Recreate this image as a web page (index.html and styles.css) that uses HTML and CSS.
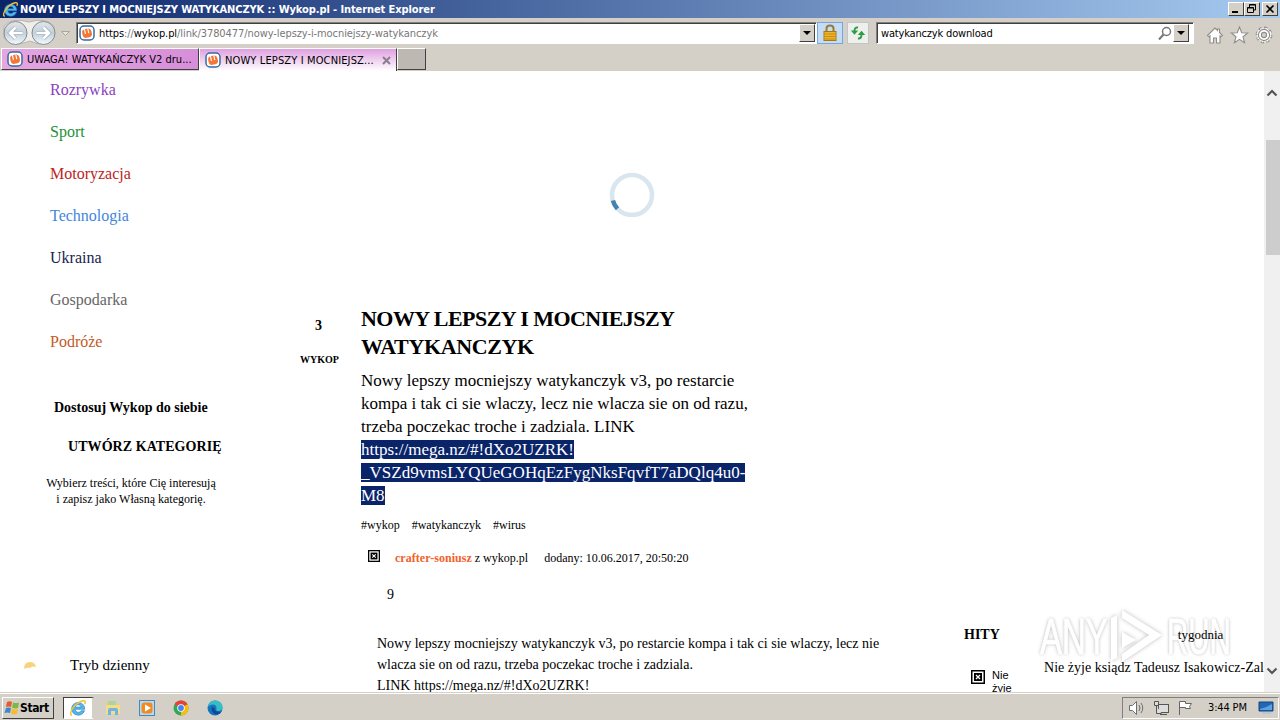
FILE: index.html
```
<!DOCTYPE html>
<html lang="pl">
<head>
  <meta charset="UTF-8"/>
  <title>NOWY LEPSZY I MOCNIEJSZY WATYKANCZYK :: Wykop.pl</title>
  <link rel="stylesheet" href="styles.css">
</head>
<body>
<!-- shared icons -->
<svg class="defs" width="0" height="0">
  <symbol id="ie" viewBox="0 0 16 16">
    <path d="M14 9.200H5.500c.2 3 4.200 3.300 5.200 1.200h3.100C11.800 16.500 2.200 15.300 2.400 8.500 2.600 1.500 14 .8 14 9.200zM5.500 7.200h5.200c-.4-2.800-4.800-2.800-5.200 0z" fill="#52b6ec" stroke="#2377b9" stroke-width=".5"/>
    <path d="M2.600 14.500C-1.500 13 6 2.800 12.500 1.600c2.400-.3 2.300 1.500 1.400 3" fill="none" stroke="#f2c136" stroke-width="1.300"/>
  </symbol>
  <symbol id="wykop" viewBox="0 0 16 16">
    <rect x="1" y="1" width="14" height="14" rx="4" fill="#fff" stroke="#376b9f" stroke-width="1.500"/>
    <g transform="rotate(-12 8 8)">
      <rect x="3.300" y="3.800" width="9.400" height="8.800" rx="3.300" fill="#f37736"/>
      <path d="M6.300 3.500v5M9.700 3.500v5" fill="none" stroke="#fff" stroke-width="1.100"/>
    </g>
  </symbol>
  <symbol id="broken" viewBox="0 0 14 14">
    <rect x=".75" y=".75" width="12.500" height="12.500" fill="#fff" stroke="#000" stroke-width="1.500"/>
    <rect x="3" y="3" width="8" height="8" fill="#000"/>
    <path d="M5 5l4 4M9 5l-4 4" stroke="#fff" stroke-width="1.300"/>
  </symbol>
</svg>

<header class="titlebar">
  <svg class="app-icon"><use href="#ie"/></svg>
  <span class="title">NOWY LEPSZY I MOCNIEJSZY WATYKANCZYK :: Wykop.pl - Internet Explorer</span>
  <div class="win-buttons">
    <i><svg viewBox="0 0 14 12"><path d="M3 9h6" stroke="#000" stroke-width="2"/></svg></i>
    <i><svg viewBox="0 0 14 12"><path d="M4.500 4V1.500h6V7H9M2.500 4.500h6v5h-6zM4.500 2h6M2.500 5h6" fill="none" stroke="#000"/></svg></i>
    <i class="close"><svg viewBox="0 0 14 12"><path d="M3.500 2.500l7 7M10.500 2.500l-7 7" stroke="#000" stroke-width="1.600"/></svg></i>
  </div>
</header>

<nav class="toolbar">
  <svg class="backfwd" viewBox="0 0 74 30">
    <defs>
      <linearGradient id="orb" x2="0" y2="1">
        <stop offset="0" stop-color="#e4e7ea"/><stop offset=".5" stop-color="#c2cfda"/><stop offset="1" stop-color="#f3fbfe"/>
      </linearGradient>
    </defs>
    <path d="M4 8Q12-1 29 4 46-1 54 8v12q-10 10-24 3Q14 30 4 20z" fill="#f0eeea" stroke="#b9b6b0"/>
    <g fill="url(#orb)" stroke="#858b91">
      <circle cx="15.500" cy="15" r="11.500"/><circle cx="43.500" cy="15" r="11.500"/>
    </g>
    <g fill="none" stroke="#9aacba" stroke-width="4">
      <path d="M22.500 15H10M15.500 9.500L10 15l5.500 5.500M36.500 15H49M43.500 9.500L49 15l-5.500 5.500"/>
    </g>
    <g fill="none" stroke="#fff" stroke-width="2.600">
      <path d="M22.500 15H10M15.500 9.500L10 15l5.500 5.500M36.500 15H49M43.500 9.500L49 15l-5.500 5.500"/>
    </g>
    <path d="M61.500 13.500h8l-4 4z" fill="#e8e5df" stroke="#aaa59d"/>
  </svg>
  <div class="field address">
    <svg class="fav"><use href="#wykop"/></svg>
    <span class="url"><b>https</b>://<b>wykop.pl</b>/link/3780477/nowy-lepszy-i-mocniejszy-watykanczyk</span>
    <i class="drop"></i>
  </div>
  <div class="tool lock">
    <svg width="16" height="18" viewBox="0 0 16 18">
      <path d="M4.500 8V4.500q0-3 3.500-3t3.500 3V8" fill="none" stroke="#9b7b35" stroke-width="2"/>
      <rect x="2" y="7.500" width="12" height="9" fill="#eeb42c" stroke="#a8780d"/>
      <path d="M3 10h10M3 12.500h10M3 15h10" stroke="#c98b16"/>
    </svg>
  </div>
  <div class="tool refresh">
    <svg width="16" height="16" viewBox="0 0 16 16" fill="none" stroke="#2f9b43" stroke-width="1.900">
      <path d="M8 2.500Q4.500 2 4.500 6M8 13.500q3.500 .5 3.500-4"/>
      <path d="M.8 5.500h7.400L4.500 9.800zM7.800 10h7.400L11.500 5.800z" fill="#2f9b43" stroke="none"/>
    </svg>
  </div>
  <div class="field search">
    <span>watykanczyk download</span>
    <svg class="glass" width="14" height="15" viewBox="0 0 14 15"><circle cx="8.500" cy="5.500" r="4" fill="none" stroke="#777" stroke-width="1.500"/><path d="M5.500 8.500l-4.500 5" stroke="#777" stroke-width="2"/></svg>
    <i class="drop"></i>
  </div>
  <svg class="actions" viewBox="0 0 70 20" fill="#fff" stroke="#8f8d89" stroke-width="1.100">
    <path d="M1.500 10.500L9 3l2.500 2.500V4h2v3.500l3 3-1.500 1.300-1-1V18h-3.500v-5h-3v5H4v-7.200l-1 1z"/>
    <path d="M33.500 2l2.200 5.700 6 .3-4.700 3.800 1.600 6-5.100-3.400-5.100 3.400 1.600-6L25.300 8l6-.3z"/>
    <circle cx="58" cy="10" r="6.800" stroke-width="3.200" stroke-dasharray="2.840 2.500"/>
    <circle cx="58" cy="10" r="6.500" stroke="#fff" stroke-width="2" stroke-dasharray="1.600 3.500" stroke-dashoffset="-.5"/>
    <circle cx="58" cy="10" r="5.600"/><circle cx="58" cy="10" r="2.600" fill="#d4d0c8"/>
  </svg>
</nav>

<div class="tabs">
  <div class="tab"><svg class="fav"><use href="#wykop"/></svg><span class="tab-a">UWAGA! WATYKAŃCZYK V2 dru...</span></div>
  <div class="tab active"><svg class="fav"><use href="#wykop"/></svg><span class="tab-b">NOWY LEPSZY I MOCNIEJSZ...</span>
    <svg class="x" viewBox="0 0 9 9"><path d="M1 1l7 7M8 1L1 8" stroke="#8c7c90" stroke-width="2"/></svg></div>
  <div class="tab new"></div>
</div>

<main>
  <aside class="sidebar">
    <ul>
      <li class="purple">Rozrywka</li>
      <li class="green">Sport</li>
      <li class="red">Motoryzacja</li>
      <li class="blue">Technologia</li>
      <li class="navy">Ukraina</li>
      <li class="gray">Gospodarka</li>
      <li class="orange">Podróże</li>
    </ul>
    <p class="customize">Dostosuj Wykop do siebie</p>
    <p class="create">UTWÓRZ KATEGORIĘ</p>
    <p class="hint">Wybierz treści, które Cię interesują<br>i zapisz jako Własną kategorię.</p>
    <div class="mode">
      <svg width="14" height="9" viewBox="0 0 14 9"><path d="M1 8Q1 1 7 1q5 0 6 5-4-1.500-6 1-3-1-6 1z" fill="#fbd27c"/></svg>
      <span>Tryb dzienny</span>
    </div>
  </aside>

  <div class="votes">
    <p class="count">3</p>
    <p class="label">WYKOP</p>
  </div>

  <article>
    <svg class="spinner" viewBox="0 0 46 46" fill="none" stroke-width="4.500">
      <circle cx="23" cy="23" r="20" stroke="#d9e6f0"/>
      <path d="M3.900 28.500A20 20 0 0 0 8.500 36.800" stroke="#4682ae"/>
    </svg>
    <h1><span class="h-a">NOWY LEPSZY I MOCNIEJSZY</span><br><span class="h-b">WATYKANCZYK</span></h1>
    <p class="lead">
      Nowy lepszy mocniejszy watykanczyk v3, po restarcie<br>
      kompa i tak ci sie wlaczy, lecz nie wlacza sie on od razu,<br>
      trzeba poczekac troche i zadziala. LINK<br>
      <mark>https://mega.nz/#!dXo2UZRK!</mark><br>
      <mark class="key">_VSZd9vmsLYQUeGOHqEzFygNksFqvfT7aDQlq4u0-</mark><br>
      <mark>M8</mark>
    </p>
    <div class="tags"><span>#wykop</span><span>#watykanczyk</span><span>#wirus</span></div>
    <div class="author">
      <svg><use href="#broken"/></svg>
      <span class="who"><b>crafter-soniusz</b> z wykop.pl</span>
      <span class="when">dodany: 10.06.2017, 20:50:20</span>
    </div>
    <p class="nine">9</p>
    <div class="comment">
      <p>Nowy lepszy mocniejszy watykanczyk v3, po restarcie kompa i tak ci sie wlaczy, lecz nie</p>
      <p>wlacza sie on od razu, trzeba poczekac troche i zadziala.</p>
      <p>LINK https://mega.nz/#!dXo2UZRK!</p>
    </div>
  </article>

  <aside class="hits">
    <!-- watermark behind the column text -->
    <div class="watermark">
      <span>ANY</span>
      <svg viewBox="0 0 56 58">
        <path d="M2 10l6-3v43l-6 3zM13 2l40 25-40 27v-8l27-19-27-17zM13 24l14 8-14 8z" fill="#fff"/>
      </svg>
      <span class="run">RUN</span>
    </div>
    <div class="hits-head"><b>HITY</b><span>tygodnia</span></div>
    <div class="hit">
      <svg><use href="#broken"/></svg>
      <p class="alt">Nie<br>żyje</p>
      <p class="hit-title">Nie żyje ksiądz Tadeusz Isakowicz-Zal</p>
    </div>
  </aside>

  <div class="scrollbar">
    <svg viewBox="0 0 12 8"><path d="M1.500 6.500L6 2l4.500 4.500" fill="none" stroke="#555" stroke-width="2.200"/></svg>
    <div class="thumb"></div>
    <svg viewBox="0 0 12 8"><path d="M1.500 1.500L6 6l4.500-4.500" fill="none" stroke="#555" stroke-width="2.200"/></svg>
  </div>
</main>

<footer class="taskbar">
  <div class="start">
    <svg width="16" height="16" viewBox="0 0 16 16">
      <path d="M3 2q3-1.500 5 0L7 7Q4.500 6 2 7z" fill="#e8592c"/><path d="M9 2.500q3 1.200 6 0L14 8q-3 1-6-.5z" fill="#7bb844"/>
      <path d="M2 8q2.500-1 5 0l-1 5q-2.500-1.200-5.500 0z" fill="#3b87d0"/><path d="M8 8.500q3 1.500 6 .5l-1.200 5q-3 1-6-.5z" fill="#f5bd2c"/>
    </svg>
    <b>Start</b>
  </div>
  <div class="task-ie"><svg><use href="#ie"/></svg></div>
  <div class="launch">
    <svg viewBox="0 0 18 18"><path d="M2 3h5l1 2h7v10H2z" fill="#edcf71"/><path d="M4 2h8v6H4z" fill="#acd3a0"/><path d="M2 6h14v9H2z" fill="#f3dc8c"/><path d="M4 16v-5q0-2 2-2h6q2 0 2 2v5h-3v-4H7v4z" fill="#70b5dd"/></svg>
    <svg viewBox="0 0 18 18"><rect x="1.500" y="1.500" width="15" height="15" fill="#b9d9ef" stroke="#4389bf"/><rect x="3.500" y="3.500" width="11" height="11" rx="3" fill="#f18a21"/><path d="M7 5.500l6 3.500-6 3.500z" fill="#fff"/></svg>
    <svg viewBox="0 0 18 18"><circle cx="9" cy="9" r="7.500" fill="#35a853"/><path d="M9 9L2.500 5.200A7.500 7.500 0 0 1 15.500 5.200z" fill="#e94235"/><path d="M9 9l6.500-3.800A7.500 7.500 0 0 1 9 16.500z" fill="#fbbd09"/><circle cx="9" cy="9" r="3.800" fill="#fff"/><circle cx="9" cy="9" r="2.900" fill="#4385f3"/></svg>
    <svg viewBox="0 0 18 18"><circle cx="9" cy="9" r="7.500" fill="#1674bf"/><path d="M1.500 8Q3 1.500 9.500 1.500q7 .5 7 7Q16 12 11.500 12q-2-.5-1-2Q11 5 6 5.500 3 6 1.500 8z" fill="#35bfc4"/><path d="M6 8q-2 5 3.500 7.500 4 0 6-3Q9 14 8.500 9z" fill="#0e4a9a"/></svg>
  </div>
  <div class="tray">
    <svg width="18" height="16" viewBox="0 0 18 16" fill="#fff" stroke="#6e6e6e"><path d="M1.500 5.500h3l4-4v13l-4-4h-3z"/><path d="M11 5q2 3 0 6M13 3q3.500 5 0 10" fill="none"/></svg>
    <svg width="17" height="16" viewBox="0 0 17 16" fill="#ddd" stroke="#555"><rect x="5.500" y="4.500" width="10" height="8"/><path d="M7 14.500h7M1.500 1.500h4v4h-4zM3.500 6v7.500h5" /></svg>
    <svg width="17" height="16" viewBox="0 0 17 16" fill="#fff" stroke="#666"><path d="M2.500 15V1.500h6v2h6l-2 3 1 2h-5v-1h-6"/></svg>
    <span>3:44 PM</span>
    <svg width="16" height="14" viewBox="0 0 16 14"><path d="M1 1h14v9H1z" fill="#2266b8" stroke="#174477"/><path d="M2 8Q8 7 14 3v6H2z" fill="#5ba3e0"/><path d="M4 12h9" stroke="#b8c7d8" stroke-width="2"/></svg>
  </div>
</footer>
</body>
</html>
```
FILE: styles.css
```
* {
    box-sizing: border-box;
}

body {
    margin: 0;
    width: 1280px;
    height: 720px;
    overflow: hidden;
    display: flex;
    flex-direction: column;
    background: #d4d0c8;
    color: #000;
    font-family: "Liberation Serif", serif;
}

p, h1, ul {
    margin: 0;
    padding: 0;
    font-size: inherit;
}

span, b, p, mark {
    white-space: nowrap;
}

svg {
    display: block;
    flex: none;
}

.defs {
    position: absolute;
}

/* browser window */
.titlebar {
    flex: none;
    height: 18px;
    display: flex;
    align-items: center;
    padding: 0 2px;
    background: linear-gradient(90deg, #0a246a, #a6caf0);
    color: #fff;
}

.app-icon {
    width: 17px;
    height: 17px;
}

.title {
    margin-left: 1px;
    font: bold 11px "DejaVu Sans Condensed", "DejaVu Sans", sans-serif;
    letter-spacing: -0.09px;
}

.win-buttons {
    display: flex;
    margin-left: auto;
}

.win-buttons i, .drop {
    width: 16px;
    height: 14px;
    background: #d4d0c8;
    border: 1px solid;
    border-color: #fff #404040 #404040 #fff;
}

.win-buttons svg {
    width: 14px;
    height: 12px;
}

.win-buttons .close {
    margin-left: 2px;
}

.toolbar {
    flex: none;
    height: 30px;
    display: flex;
    align-items: center;
    font: 11px "DejaVu Sans Condensed", "DejaVu Sans", sans-serif;
}

.backfwd {
    width: 74px;
    height: 30px;
    margin-right: 2px;
}

.field {
    display: flex;
    align-items: center;
    height: 22px;
    background: #fff;
    border: 1px solid;
    border-color: #808080 #fff #fff #808080;
    box-shadow: inset 1px 1px #404040;
    padding-left: 4px;
}

.address {
    width: 741px;
    padding-left: 2px;
}

.fav {
    width: 16px;
    height: 16px;
}

.url {
    margin-left: 4px;
    color: #777;
    letter-spacing: -0.08px;
}

.url b {
    color: #000;
    font-weight: normal;
}

.drop {
    position: relative;
    height: 18px;
    margin-left: auto;
    margin-right: 1px;
}

.drop::after {
    content: "";
    position: absolute;
    left: 3px;
    top: 6px;
    border: 4px solid transparent;
    border-top-color: #000;
    border-bottom: 0;
}

.tool {
    width: 26px;
    height: 22px;
    display: flex;
    align-items: center;
    justify-content: center;
}

.lock {
    background: #c4ddf5;
    border: 1px solid #75a6dc;
}

.refresh {
    width: 22px;
    margin-left: 4px;
    background: #edf0ed;
    border: 1px solid #c1c5c8;
}

.search {
    width: 318px;
    margin-left: 7px;
    letter-spacing: -0.17px;
}

.search .glass {
    margin-left: auto;
}

.search .drop {
    margin-left: 1px;
    margin-right: 4px;
}

.actions {
    width: 70px;
    height: 20px;
    margin-left: 12px;
    margin-top: 4px;
}

.tabs {
    flex: none;
    height: 23px;
    display: flex;
    align-items: flex-start;
    padding-left: 1px;
    font: 11px "DejaVu Sans Condensed", "DejaVu Sans", sans-serif;
}

.tab {
    display: flex;
    align-items: center;
    width: 198px;
    height: 22px;
    padding-left: 5px;
    background: linear-gradient(90deg, #e5a6e4, #d78ed8);
    border: 1px solid;
    border-color: #fff #404040 #404040 #fff;
}

.tab.active {
    height: 23px;
    border-bottom: 0;
    background: linear-gradient(#dfa0e0, #fff);
}

.tab span {
    margin-left: 4px;
}

.tab .x {
    width: 9px;
    height: 9px;
    margin-left: auto;
    margin-right: 5px;
}

.tab-a {
    letter-spacing: 0.03px;
}

.tab-b {
    letter-spacing: 0.13px;
}

.tab.new {
    width: 29px;
    background: #bdb9b2;
}

/* page */
main {
    flex: none;
    height: 621px;
    display: flex;
    background: #fff;
    overflow: hidden;
}

.sidebar {
    width: 288px;
}

.sidebar ul {
    list-style: none;
    padding: 8px 0 0 50px;
    font-size: 16px;
    line-height: 22px;
}

.sidebar li {
    height: 42px;
}

.purple { color: #8a3fc0; }
.green { color: #259236; }
.red { color: #bd2424; }
.blue { color: #4286dc; }
.navy { color: #18244c; }
.gray { color: #666; }
.orange { color: #c35b25; }

.customize {
    margin: 25px 0 0 54px;
    line-height: 20px;
    font-size: 14px;
    font-weight: bold;
}

.create {
    margin: 19px 0 0 68px;
    line-height: 20px;
    font-size: 14px;
    font-weight: bold;
    letter-spacing: 0.06px;
}

.hint {
    width: 262px;
    margin-top: 18px;
    text-align: center;
    font-size: 12px;
    line-height: 16px;
}

.mode {
    display: flex;
    align-items: center;
    height: 20px;
    margin: 148px 0 0 23px;
    font-size: 15px;
}

.mode span {
    margin-left: 33px;
}

.votes {
    width: 61px;
    padding-top: 246px;
    text-align: center;
    font-weight: bold;
}

.count {
    font-size: 14px;
    line-height: 18px;
}

.label {
    margin: 16px 0 0 2px;
    font-size: 10px;
    line-height: 18px;
}

article {
    width: 615px;
    padding-left: 12px;
}

.spinner {
    width: 46px;
    height: 46px;
    margin: 101px 0 0 248px;
}

h1 {
    margin-top: 87px;
    font-size: 22px;
    line-height: 28px;
}

.h-a {
    letter-spacing: -0.55px;
}

.h-b {
    letter-spacing: -0.36px;
}

.lead {
    margin-top: 8px;
    font-size: 17px;
    line-height: 23px;
}

mark {
    background: #0a246a;
    color: #fff;
}

.key {
    letter-spacing: 0.02px;
}

.tags {
    display: flex;
    gap: 12px;
    margin-top: 8px;
    font-size: 12px;
    line-height: 20px;
}

.author {
    display: flex;
    margin-top: 13px;
    font-size: 12px;
    line-height: 20px;
}

.author svg {
    width: 12px;
    height: 12px;
    margin: 2px 15px 0 7px;
}

.who b {
    color: #f2622c;
    letter-spacing: 0.04px;
}

.when {
    margin-left: 16px;
}

.nine {
    margin: 17px 0 0 26px;
    font-size: 14px;
    line-height: 20px;
}

.comment {
    margin: 28px 0 0 16px;
    font-size: 14px;
    line-height: 21px;
}

.hits {
    position: relative;
    width: 300px;
    height: 621px;
    padding-top: 554px;
    overflow: hidden;
}

.hits-head {
    position: relative;
    display: flex;
    height: 20px;
    line-height: 20px;
    font-size: 14px;
}

.hits-head span {
    margin-left: 178px;
    font-size: 13px;
}

.hit {
    position: relative;
    display: flex;
    margin-top: 13px;
}

.hit svg {
    width: 14px;
    height: 14px;
    margin: 12px 7px 0;
}

.alt {
    width: 52px;
    margin-top: 11px;
    font: 11px/13px "Liberation Sans", sans-serif;
}

.hit-title {
    font-size: 14px;
    line-height: 20px;
    letter-spacing: 0.03px;
}

.watermark {
    position: absolute;
    left: 76px;
    top: 537px;
    display: flex;
    align-items: center;
    font: 50px "Liberation Sans", sans-serif;
    color: #fff;
    text-shadow: 0 0 3px #bbb, 0 0 5px #ccc;
}

.watermark span {
    width: 66px;
    transform: scaleX(0.66);
    transform-origin: left;
    -webkit-text-stroke: 1px #fff;
}

.watermark svg {
    width: 56px;
    height: 58px;
    margin-left: 3px;
    filter: drop-shadow(0 0 2px #bbb);
}

.watermark .run {
    transform: scaleX(0.59);
    margin-left: 2px;
}

.scrollbar {
    display: flex;
    flex-direction: column;
    align-items: center;
    width: 16px;
    padding: 18px 0 17px;
    background: #f0f0f0;
}

.scrollbar svg {
    width: 12px;
    height: 8px;
}

.thumb {
    width: 14px;
    height: 115px;
    margin: 43px 0 auto 1px;
    background: #cdcdcd;
}

/* desktop taskbar */
.taskbar {
    flex: 1;
    display: flex;
    align-items: center;
    border-top: 1px solid #d4d0c8;
    box-shadow: inset 0 1px #fff;
    padding: 2px 1px 0 2px;
    font: 11px "DejaVu Sans Condensed", "DejaVu Sans", sans-serif;
}

.start {
    display: flex;
    align-items: center;
    width: 52px;
    height: 22px;
    padding-left: 1px;
    border: 1px solid;
    border-color: #fff #404040 #404040 #fff;
    font-size: 12px;
    letter-spacing: -0.4px;
}

.task-ie {
    display: flex;
    align-items: center;
    justify-content: center;
    width: 31px;
    height: 22px;
    margin-left: 9px;
    background: #fff;
    border: 1px solid #404040;
    border-right: 2px solid #d4d0c8;
    border-bottom-color: #fff;
}

.task-ie svg {
    width: 18px;
    height: 18px;
}

.launch {
    display: flex;
    gap: 16px;
    margin-left: 10px;
}

.launch svg {
    width: 18px;
    height: 18px;
}

.tray {
    display: flex;
    align-items: center;
    gap: 7px;
    width: 157px;
    height: 22px;
    margin-left: auto;
    padding-left: 5px;
    border: 1px solid;
    border-color: #808080 #fff #fff #808080;
    letter-spacing: -0.15px;
}

.tray span {
    width: 41px;
    margin: 0 2px 0 7px;
}
```
